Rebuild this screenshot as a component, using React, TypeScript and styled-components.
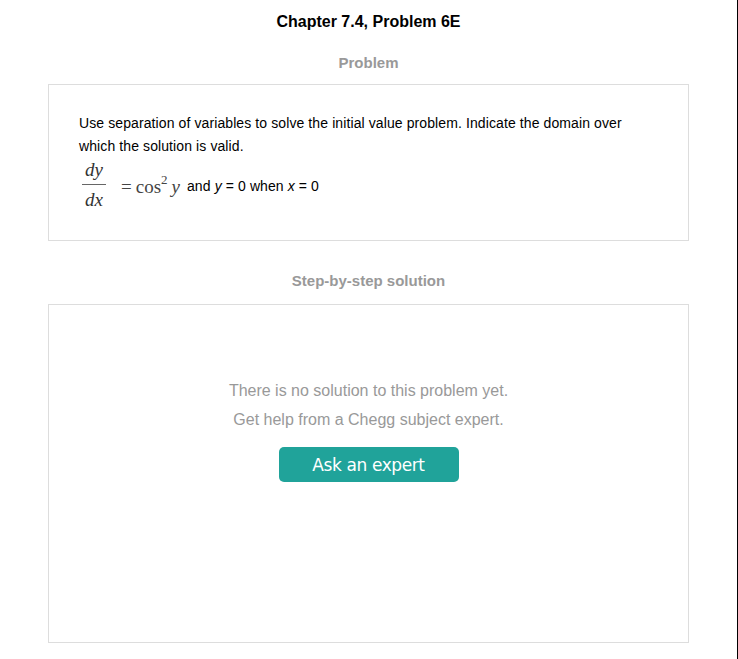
import React from "react";
import styled, { createGlobalStyle } from "styled-components";

const GlobalStyle = createGlobalStyle`
  html, body {
    margin: 0;
    padding: 0;
    background: #ffffff;
  }
  body {
    font-family: "Liberation Sans", Arial, sans-serif;
    color: #000;
  }
  * { box-sizing: border-box; }
`;

const Page = styled.div`
  width: 738px;
  min-height: 659px;
  border-right: 1px solid #000;
  display: flex;
  flex-direction: column;
  align-items: center;
  padding: 12px 48px 0 48px;
`;

const Title = styled.h1`
  margin: 0;
  font-size: 16px;
  line-height: 19px;
  font-weight: bold;
  color: #000;
  text-align: center;
`;

const SectionLabel = styled.h2<{ $top: number; $bottom: number }>`
  margin: ${(p) => p.$top}px 0 ${(p) => p.$bottom}px;
  font-size: 15px;
  line-height: 18px;
  font-weight: bold;
  color: #999999;
  text-align: center;
`;

const Card = styled.section`
  width: 641px;
  border: 1px solid #dddddd;
  background: #fff;
`;

const ProblemCard = styled(Card)`
  padding: 27px 30px 30px 30px;
`;

const ProblemText = styled.p`
  margin: 0;
  font-size: 14px;
  letter-spacing: 0.1px;
  line-height: 23px;
  color: #000;
`;

const EquationRow = styled.div`
  display: flex;
  align-items: center;
  margin-top: 2px;
  padding-left: 3px;
`;

const Fraction = styled.span`
  display: inline-flex;
  flex-direction: column;
  align-items: center;
  font-family: "Liberation Serif", "Times New Roman", serif;
  font-style: italic;
  font-size: 19px;
  color: #333;
  line-height: 20px;
`;

const FracBar = styled.span`
  display: block;
  width: 24px;
  height: 1px;
  background: #666;
  margin: 4px 0 5px;
`;

const MathText = styled.span`
  font-family: "Liberation Serif", "Times New Roman", serif;
  font-size: 19px;
  color: #444;
  margin-left: 15px;
  position: relative;
  top: 2px;
  white-space: nowrap;
`;

const Operator = styled.span`
  margin-right: 4px;
`;

const MathVar = styled.i`
  font-style: italic;
  margin-left: 4px;
`;

const Sup = styled.sup`
  font-size: 13px;
  vertical-align: 9px;
  line-height: 0;
`;

const Condition = styled.span`
  font-size: 14px;
  letter-spacing: 0.1px;
  color: #000;
  margin-left: 7px;
  position: relative;
  top: 1px;
`;

const SolutionCard = styled(Card)`
  height: 339px;
  padding-top: 71px;
  display: flex;
  flex-direction: column;
  align-items: center;
`;

const Notice = styled.p`
  margin: 0;
  font-size: 16px;
  line-height: 29px;
  color: #999999;
  text-align: center;
`;

const AskButton = styled.button`
  margin-top: 13px;
  width: 180px;
  height: 35px;
  border: none;
  border-radius: 5px;
  background: #20a39a;
  color: #fff;
  font-family: "DejaVu Sans", Verdana, sans-serif;
  font-size: 17px;
  letter-spacing: -0.4px;
  cursor: pointer;
  padding: 0;
`;

export default function App() {
  return (
    <>
      <GlobalStyle />
      <Page>
        <Title>Chapter 7.4, Problem 6E</Title>
        <SectionLabel $top={23} $bottom={12}>Problem</SectionLabel>
        <ProblemCard>
          <ProblemText>
            Use separation of variables to solve the initial value problem. Indicate the domain over
            which the solution is valid.
          </ProblemText>
          <EquationRow>
            <Fraction>
              <span>dy</span>
              <FracBar />
              <span>dx</span>
            </Fraction>
            <MathText>
              <Operator>=</Operator>cos<Sup>2</Sup>
              <MathVar>y</MathVar>
            </MathText>
            <Condition>
              and <i>y</i> = 0 when <i>x</i> = 0
            </Condition>
          </EquationRow>
        </ProblemCard>
        <SectionLabel $top={31} $bottom={14}>Step-by-step solution</SectionLabel>
        <SolutionCard>
          <Notice>There is no solution to this problem yet.</Notice>
          <Notice>Get help from a Chegg subject expert.</Notice>
          <AskButton>Ask an expert</AskButton>
        </SolutionCard>
      </Page>
    </>
  );
}
